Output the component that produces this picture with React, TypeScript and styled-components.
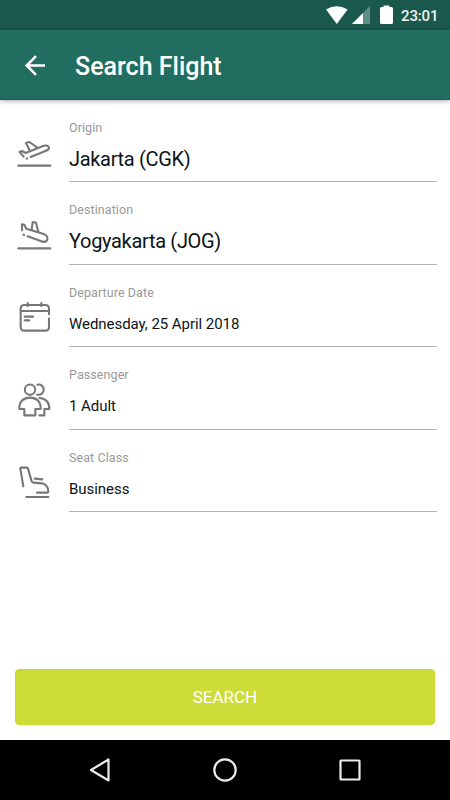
import React from "react";
import styled, { createGlobalStyle } from "styled-components";

const GlobalStyle = createGlobalStyle`
  * { box-sizing: border-box; }
  body { margin: 0; background: #fff; font-family: Roboto, "Liberation Sans", sans-serif; }
`;

const Screen = styled.div`
  width: 450px;
  height: 800px;
  display: flex;
  flex-direction: column;
  background: #fff;
  overflow: hidden;
`;

const StatusBar = styled.div`
  height: 30px;
  flex: none;
  display: flex;
  justify-content: flex-end;
  align-items: center;
  padding-right: 10px;
  background: #1b584c;
  color: #eef4f2;
`;

const StatusIcons = styled.svg`
  width: 76px;
  height: 30px;
  display: block;
`;

const Clock = styled.span`
  width: 39px;
  padding-top: 1px;
  font-size: 15px;
  line-height: 30px;
  font-weight: 500;
  letter-spacing: -0.15px;
  white-space: nowrap;
`;

const Toolbar = styled.header`
  height: 70px;
  flex: none;
  display: flex;
  align-items: center;
  padding-left: 20px;
  background: #216e60;
  border-bottom: 1px solid #14604f;
  box-shadow: 0 1px 5px rgba(0, 0, 0, 0.35);
`;

const BackButton = styled.button`
  width: 30px;
  height: 30px;
  padding: 0;
  border: 0;
  background: none;
  svg { display: block; }
`;

const Title = styled.h1`
  margin: 4px 0 0 25px;
  font-size: 25px;
  line-height: 30px;
  font-weight: 500;
  color: #fff;
`;

const Form = styled.main`
  flex: 1;
  display: grid;
  grid-template-rows: 82px 83px 82px 83px 82px;
  padding-right: 13px;
`;

const Row = styled.div`
  display: grid;
  grid-template-columns: 50px 1fr;
  column-gap: 9px;
  padding-left: 10px;
`;

const RowIcon = styled.svg`
  width: 50px;
  height: 50px;
  margin-top: 28px;
  fill: none;
  stroke: #777;
  stroke-width: 6.3;
  stroke-linecap: round;
  stroke-linejoin: round;
`;

const Field = styled.div`
  display: flex;
  flex-direction: column;
  padding-top: 20px;
  border-bottom: 1px solid #b2b2b2;
`;

const Label = styled.span`
  font-size: 12.5px;
  line-height: 16px;
  letter-spacing: 0.08px;
  color: #999;
`;

const Value = styled.span<{ $large?: boolean }>`
  margin-top: 11px;
  font-size: ${(p) => (p.$large ? 20 : 15)}px;
  line-height: 24px;
  letter-spacing: ${(p) => (p.$large ? -0.32 : -0.05)}px;
  color: #0c1418;
`;

const Footer = styled.footer`
  flex: none;
  padding: 0 15px 15px;
`;

const SearchButton = styled.button`
  display: block;
  width: 100%;
  height: 56px;
  padding: 0;
  border: 1px solid #c9d92a;
  border-radius: 4px;
  background: #cddc39;
  color: #fff;
  font-family: inherit;
  font-size: 17px;
`;

const NavBar = styled.nav`
  height: 60px;
  flex: none;
  display: grid;
  grid-template-columns: repeat(3, 125px);
  justify-content: center;
  justify-items: center;
  align-items: center;
  background: #000;
`;

const NavIcon = styled.svg`
  width: 30px;
  height: 30px;
  fill: none;
  stroke: #ececec;
  stroke-width: 2.2;
  stroke-linejoin: round;
`;

type FieldData = {
  label: string;
  value: string;
  large?: boolean;
  viewBox: string;
  icon: React.ReactNode;
};

const fields: FieldData[] = [
  {
    label: "Origin",
    value: "Jakarta (CGK)",
    large: true,
    viewBox: "0 -6 150 150",
    icon: (
      <>
        <path d="M25 107H121" />
        <path d="M41 80L29 66L36 63L47 69L99 48C109 44 117 48 117 53C117 57 113 60 108 62L62 81" />
        <path d="M59 61L48 39L58 36L82 53" />
        <path d="M50 86L52 85" />
      </>
    ),
  },
  {
    label: "Destination",
    value: "Yogyakarta (JOG)",
    large: true,
    viewBox: "0 0 150 150",
    icon: (
      <>
        <path d="M25 115H121" />
        <path d="M36 61V43L43 44L49 56L99 71C108 74 114 81 112 88C110 95 105 97 98 95L53 79" />
        <path d="M65 58L68 36L78 38L85 65" />
        <path d="M40 74L42 75" />
      </>
    ),
  },
  {
    label: "Departure Date",
    value: "Wednesday, 25 April 2018",
    viewBox: "0 9 150 150",
    icon: (
      <>
        <path d="M117 73V56Q117 45 106 45H43Q32 45 32 56V111Q32 122 43 122H106Q117 122 117 111V86" />
        <path d="M33 63H116M53 39V48M94 39V48M44 80H69M44 91H58" />
      </>
    ),
  },
  {
    label: "Passenger",
    value: "1 Adult",
    viewBox: "0 0 150 150",
    icon: (
      <>
        <circle cx="60" cy="44" r="15.500" />
        <path d="M82 29C93 27 101 34 101 44S93 61 82 59" />
        <path d="M43 121V102H28C27 80 41 68 60 68S93 80 92 102H76V121Z" />
        <path d="M88 69C107 70 119 83 118 102H103V121H88" />
      </>
    ),
  },
  {
    label: "Seat Class",
    value: "Business",
    viewBox: "0 3 150 150",
    icon: (
      <>
        <path d="M40 88L31 35Q30 32 34 32H50Q53 32 54 35L65 73Q66 77 71 77L95 79Q114 82 115 104Q115 107 111 107H81" />
        <path d="M74 65L97 67M49 120H115" />
      </>
    ),
  },
];

export default function App() {
  return (
    <>
      <GlobalStyle />
      <Screen>
        <StatusBar>
          <StatusIcons viewBox="0 0 76 30">
            <path d="M1 9.5Q11.8 2.8 22.6 9.5L11.8 24Z" fill="#fff" />
            <path d="M45 6V24H27Z" fill="#608e84" />
            <path d="M38 13V24H27Z" fill="#fff" />
            <path d="M58.5 5.5H64.5V7H66.5Q68 7 68 8.500V22.5Q68 24 66.500 24H56.5Q55 24 55 22.500V8.500Q55 7 56.500 7H58.5Z" fill="#fff" />
          </StatusIcons>
          <Clock>23:01</Clock>
        </StatusBar>
        <Toolbar>
          <BackButton aria-label="Back">
            <svg width="30" height="30" viewBox="0 0 30 30" fill="none" stroke="#fff" strokeWidth="2.5">
              <path d="M25 15.500H7M16 6.200L6.700 15.500L16 24.800" />
            </svg>
          </BackButton>
          <Title>Search Flight</Title>
        </Toolbar>
        <Form>
          {fields.map((f) => (
            <Row key={f.label}>
              <RowIcon viewBox={f.viewBox}>{f.icon}</RowIcon>
              <Field>
                <Label>{f.label}</Label>
                <Value $large={f.large}>{f.value}</Value>
              </Field>
            </Row>
          ))}
        </Form>
        <Footer>
          <SearchButton>SEARCH</SearchButton>
        </Footer>
        <NavBar>
          <NavIcon viewBox="0 0 30 30">
            <path d="M23.500 4.500V25.500L6 15Z" />
          </NavIcon>
          <NavIcon viewBox="0 0 30 30">
            <circle cx="15" cy="15" r="10.700" />
          </NavIcon>
          <NavIcon viewBox="0 0 30 30">
            <rect x="5.500" y="5.500" width="19" height="19" rx="0.500" />
          </NavIcon>
        </NavBar>
      </Screen>
    </>
  );
}
